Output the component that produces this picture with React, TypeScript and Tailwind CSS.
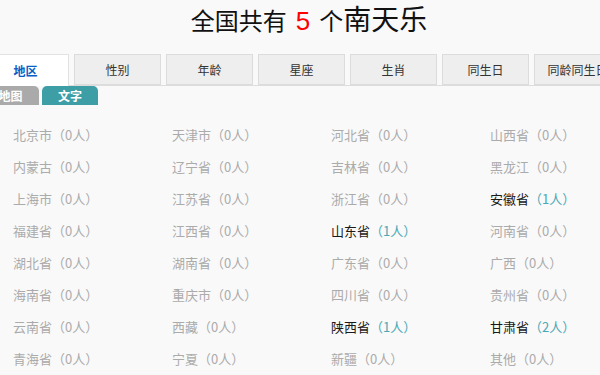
import React from "react";

const tabs = ["地区", "性别", "年龄", "星座", "生肖", "同生日", "同龄同生日"];

const regions: [string, number][] = [
  ["北京市", 0], ["天津市", 0], ["河北省", 0], ["山西省", 0],
  ["内蒙古", 0], ["辽宁省", 0], ["吉林省", 0], ["黑龙江", 0],
  ["上海市", 0], ["江苏省", 0], ["浙江省", 0], ["安徽省", 1],
  ["福建省", 0], ["江西省", 0], ["山东省", 1], ["河南省", 0],
  ["湖北省", 0], ["湖南省", 0], ["广东省", 0], ["广西", 0],
  ["海南省", 0], ["重庆市", 0], ["四川省", 0], ["贵州省", 0],
  ["云南省", 0], ["西藏", 0], ["陕西省", 1], ["甘肃省", 2],
  ["青海省", 0], ["宁夏", 0], ["新疆", 0], ["其他", 0],
];

export default function App() {
  return (
    <div
      className="w-[600px] h-[375px] overflow-hidden bg-[#f9f9f9]"
      style={{ fontFamily: '"Noto Sans CJK SC", "Noto Sans", sans-serif' }}
    >
      <div className="ml-[-18px] w-[654px]">
        <div className="h-[54px] flex items-start justify-center pt-[1px]">
          <h1 className="flex items-baseline text-[#111] font-normal leading-[34px]">
            <span className="text-[24px]">全国共有</span>
            <span
              className="text-[26px] text-[#ff0000] mx-[9px]"
              style={{ fontFamily: '"Liberation Sans", sans-serif' }}
            >
              5
            </span>
            <span className="text-[24px]">个</span>
            <span className="text-[28px]">南天乐</span>
          </h1>
        </div>
        <div className="flex gap-[5px] border-b border-[#dddddd] h-[32px]">
          {tabs.map((t, i) =>
            i === 0 ? (
              <div
                key={t}
                className="w-[87px] h-[32px] shrink-0 bg-white border border-b-0 border-[#e2e2e2] flex items-center justify-center text-[12px] font-bold text-[#0a5fc4]"
              >
                {t}
              </div>
            ) : (
              <div
                key={t}
                className="w-[87px] h-[31px] shrink-0 bg-[#eeeeee] border border-[#dcdcdc] flex items-center justify-center text-[12px] text-[#333]"
              >
                {t}
              </div>
            )
          )}
        </div>
        <div className="flex gap-[3px] h-[19px]">
          <div className="w-[57px] h-[19px] bg-[#aaaaaa] rounded-tr-[5px] flex items-center justify-center text-[12px] font-bold text-white leading-none">
            地图
          </div>
          <div className="w-[56px] h-[19px] bg-[#3d9ea6] rounded-t-[5px] flex items-center justify-center text-[12px] font-bold text-white leading-none">
            文字
          </div>
        </div>
        <div className="mt-[14px] pl-[31px] grid grid-cols-[159px_159px_159px_159px]">
          {regions.map(([name, n]) => (
            <div key={name} className="h-[32px] leading-[32px] text-[13px] whitespace-nowrap">
              {n > 0 ? (
                <>
                  <span className="text-[#1a1a1a]">{name}</span>
                  <span className="text-[#4aa8b5]">（{n}人）</span>
                </>
              ) : (
                <span className="text-[#ababab]">{name}（{n}人）</span>
              )}
            </div>
          ))}
        </div>
      </div>
    </div>
  );
}
